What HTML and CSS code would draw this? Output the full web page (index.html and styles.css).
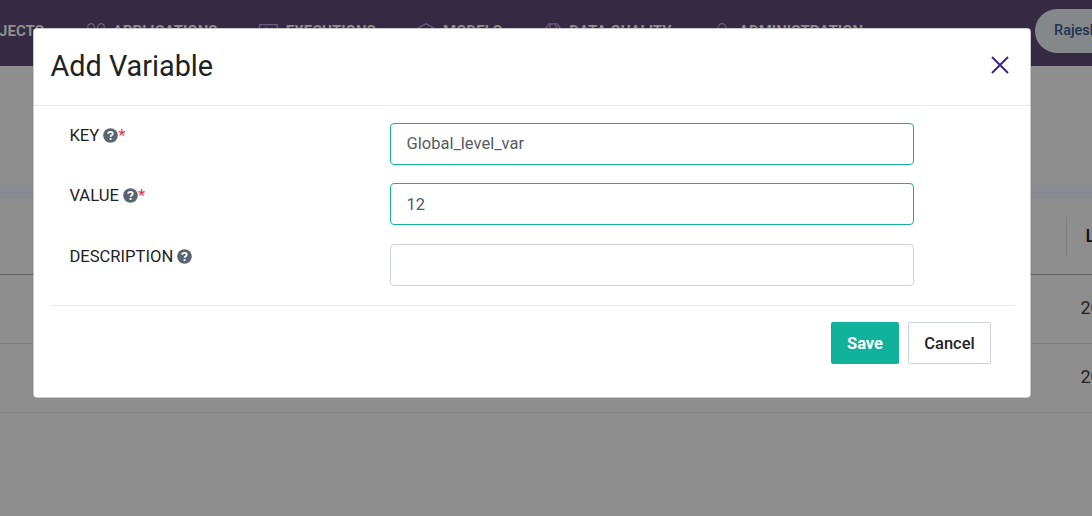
FILE: index.html
```html
<!DOCTYPE html>
<html lang="en">
<head>
<meta charset="utf-8">
<title>Add Variable</title>
<link rel="stylesheet" href="styles.css">
</head>
<body>
<div class="page">
  <header class="topbar">
    <nav class="nav">
      <a class="nav-item"><span>PROJECTS</span></a>
      <a class="nav-item"><svg viewBox="0 0 18 18"><circle cx="4" cy="4" r="3.3"/><circle cx="14" cy="4" r="3.3"/><circle cx="4" cy="14" r="3.3"/><circle cx="14" cy="14" r="3.3"/></svg><span>APPLICATIONS</span></a>
      <a class="nav-item"><svg class="wide" viewBox="0 0 19 18"><path d="M.7 1.7h17.6v14H.7zM5 6l3-2M5 6l3 3"/></svg><span>EXECUTIONS</span></a>
      <a class="nav-item"><svg viewBox="0 0 18 18"><path d="M9 .8l8 4.3v8L9 17.2l-8-4.1v-8z"/></svg><span>MODELS</span></a>
      <a class="nav-item"><svg viewBox="0 0 18 18"><path d="M5 .8h8L17 6v6l-4 5H5l-4-5V6zM7 .8L5 6v6l2 5M11 .8L13 6v6l-2 5"/></svg><span>DATA QUALITY</span></a>
      <a class="nav-item"><svg viewBox="0 0 18 18"><circle cx="9" cy="4.6" r="3.9"/><path d="M2 17c0-9 14-9 14 0"/></svg><span>ADMINISTRATION</span></a>
    </nav>
    <div class="user">Rajesh</div>
  </header>
  <section class="toolbar"></section>
  <div class="strip"></div>
  <main class="table">
    <div class="row head"><span class="label">Last</span></div>
    <div class="row"><span class="cell">2023</span></div>
    <div class="row"><span class="cell">2023</span></div>
  </main>
</div>
<div class="modal" role="dialog">
  <div class="modal-header">
    <h1>Add Variable</h1>
    <svg class="close" viewBox="0 0 18 18"><path d="M1 1l16 16M17 1L1 17"/></svg>
  </div>
  <form class="form">
    <div class="field">
      <label>KEY <svg class="help" viewBox="0 0 16 16"><circle cx="8" cy="8" r="7.8"/><path d="M5.5 6.1C5.7 3.5 10.4 3.4 10.4 6c0 1.7-2.3 1.6-2.3 3.3M8.1 10.6v2.1"/></svg><b>*</b></label>
      <input class="valid" type="text" value="Global_level_var">
    </div>
    <div class="field">
      <label>VALUE <svg class="help" viewBox="0 0 16 16"><circle cx="8" cy="8" r="7.8"/><path d="M5.5 6.1C5.7 3.5 10.4 3.4 10.4 6c0 1.7-2.3 1.6-2.3 3.3M8.1 10.6v2.1"/></svg><b>*</b></label>
      <input class="valid value" type="text" value="12">
    </div>
    <div class="field last">
      <label>DESCRIPTION <svg class="help" viewBox="0 0 16 16"><circle cx="8" cy="8" r="7.8"/><path d="M5.5 6.1C5.7 3.5 10.4 3.4 10.4 6c0 1.7-2.3 1.6-2.3 3.3M8.1 10.6v2.1"/></svg></label>
      <input type="text">
    </div>
    <div class="actions">
      <button class="save" type="button">Save</button>
      <button class="cancel" type="button">Cancel</button>
    </div>
  </form>
</div>
</body>
</html>
```

FILE: styles.css
```css
* { box-sizing: border-box; }
body {
  margin: 0;
  height: 516px;
  overflow: hidden;
  position: relative;
  background: #8e8e8e;
  font-family: Roboto, sans-serif;
  color: #212224;
}
.page { width: 1092px; overflow: hidden; }
.topbar {
  height: 66px;
  background: #352a44;
  display: flex;
  align-items: center;
  justify-content: space-between;
  overflow: hidden;
}
.nav {
  display: flex;
  align-items: center;
  gap: 41.6px;
  margin: 0 0 4px -30.5px;
  font-size: 15px;
  font-weight: 700;
  line-height: 18px;
  color: #8e8e8e;
  white-space: nowrap;
}
.nav-item { display: flex; align-items: center; gap: 7.7px; }
.nav-item svg {
  width: 18px;
  height: 18px;
  margin-top: 1px;
  fill: none;
  stroke: #705b80;
  stroke-width: 1.3;
}
.nav-item:nth-child(2) { margin-left: 1.5px; }
.nav-item .wide { width: 19px; }
.user {
  flex: none;
  width: 120px;
  height: 44px;
  margin: 0 -63px 4px 0;
  padding-left: 19px;
  border-radius: 22px;
  background: #84888a;
  color: #1f3355;
  font-size: 14.5px;
  font-weight: 500;
  line-height: 44px;
}
.toolbar { height: 120px; }
.strip { height: 13px; background: #8a8a91; }
.row {
  height: 69px;
  display: flex;
  align-items: center;
  padding: 0 0 3px 1080.5px;
  border-bottom: 1px solid #808080;
  font-size: 18px;
  white-space: nowrap;
}
.head {
  height: 76px;
  padding: 0 0 0 1066px;
  border-bottom-color: #5d5f60;
}
.label {
  height: 39px;
  padding-left: 18.5px;
  border-left: 1px solid #808080;
  font-weight: 500;
  line-height: 37px;
  color: #111;
}
.modal {
  position: absolute;
  left: 33px;
  top: 28px;
  width: 998px;
  height: 370px;
  background: #fff;
  border: 1px solid rgba(0, 0, 0, .2);
  border-radius: 4px;
  box-shadow: 0 0 1px rgba(0, 0, 0, .35);
}
.modal-header {
  height: 77px;
  padding: 0 20px 3px 16.5px;
  border-bottom: 1px solid #e9ecef;
  display: flex;
  align-items: center;
  justify-content: space-between;
}
h1 { margin: 0; font-size: 28.8px; font-weight: 400; line-height: 36px; }
.close { width: 18px; height: 18px; margin: -1px 1px 0 0; fill: none; stroke: #3d2785; stroke-width: 2; }
.form { padding: 17px 15px 0 17px; }
.field {
  display: grid;
  grid-template-columns: 321px 524px;
  margin-bottom: 18px;
  padding-left: 18px;
}
.field + .last { margin: 19px 0; }
label {
  display: flex;
  align-items: center;
  height: 24px;
  padding-left: .4px;
  white-space: pre;
  font-size: 16.6px;
}
label b { font-weight: 400; color: #e3304c; }
.help { width: 15px; height: 15px; fill: #5a6470; }
.help path { fill: none; stroke: #fff; stroke-width: 2; }
input {
  height: 42px;
  padding: 0 15.5px 1px;
  border: 1px solid #ced0da;
  border-radius: 4px;
  background: #fff;
  color: #535b63;
  font: 400 16.5px Roboto, sans-serif;
}
.valid { border-color: #10b29c; }
.value { padding-top: 1px; padding-bottom: 0; }
.actions {
  display: flex;
  justify-content: flex-end;
  gap: 9px;
  padding: 16px 24px 0 0;
  border-top: 1px solid #e6e8ea;
}
button {
  width: 68px;
  height: 42px;
  padding: 0;
  border: 1px solid #10b29c;
  border-radius: 2px;
  background: #10b29c;
  color: #fff;
  font: 700 16.5px Roboto, sans-serif;
}
.cancel { width: 83px; border-color: #ced0da; background: #fff; color: #212529; font-weight: 500; }
```
